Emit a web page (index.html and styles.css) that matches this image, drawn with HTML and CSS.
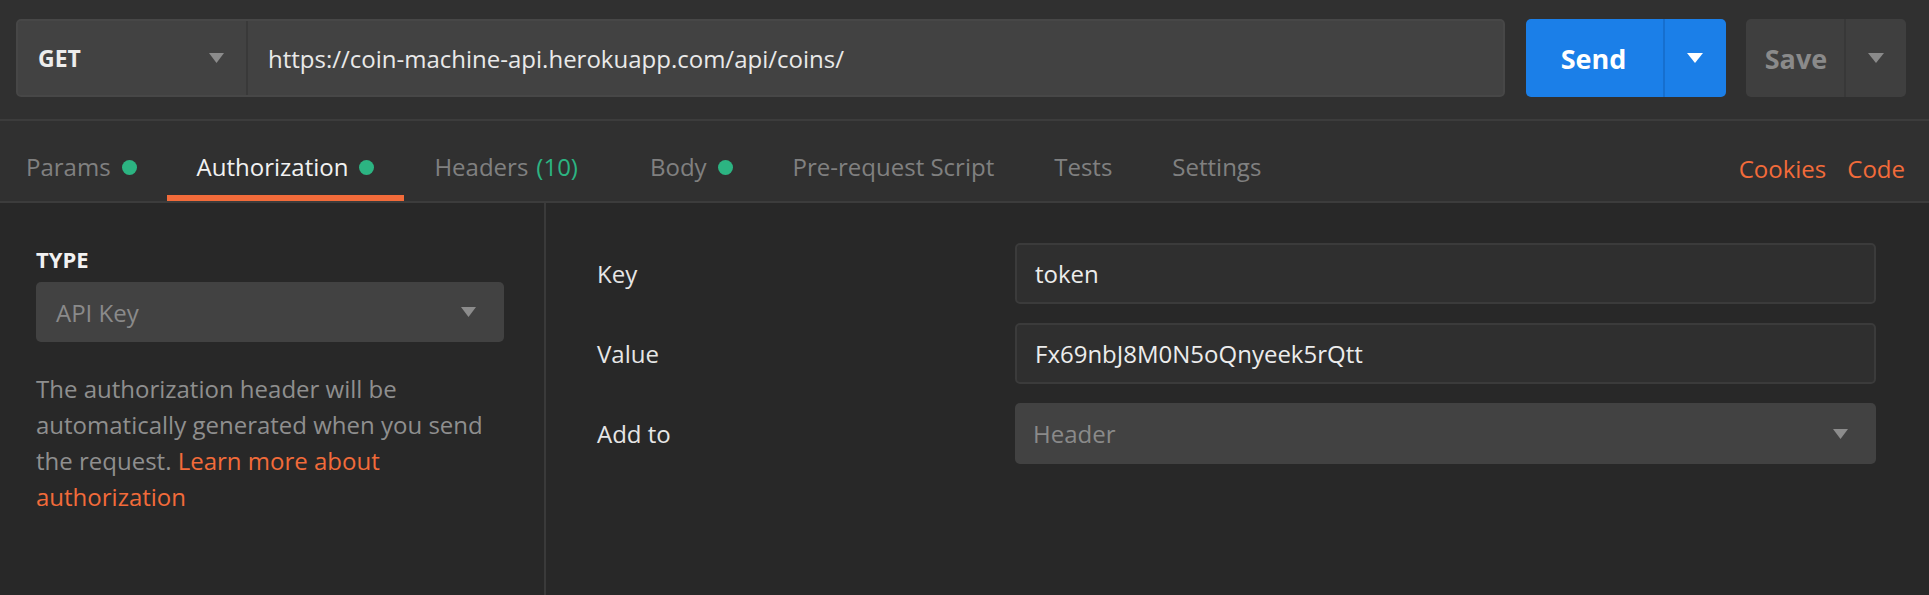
FILE: index.html
```html
<!DOCTYPE html>
<html lang="en">
<head>
<meta charset="utf-8">
<title>Request – Authorization</title>
<link rel="stylesheet" href="styles.css">
</head>
<body>
<div class="app">
  <header class="request-bar">
    <div class="url-group">
      <div class="method">
        <span class="method-name">GET</span>
        <svg class="caret caret-grey" width="15" height="10" viewBox="0 0 15 10"><path d="M0 0H15L7.5 10Z"/></svg>
      </div>
      <div class="url">https://coin-machine-api.herokuapp.com/api/coins/</div>
    </div>
    <div class="split-btn send">
      <span class="split-main">Send</span>
      <span class="split-arrow"><svg class="caret" width="16" height="10" viewBox="0 0 16 10"><path d="M0 0H16L8 10Z"/></svg></span>
    </div>
    <div class="split-btn save">
      <span class="split-main">Save</span>
      <span class="split-arrow"><svg class="caret" width="16" height="10" viewBox="0 0 16 10"><path d="M0 0H16L8 10Z"/></svg></span>
    </div>
  </header>

  <nav class="tab-bar">
    <div class="tabs">
      <div class="tab">Params<span class="dot"></span></div>
      <div class="tab active">Authorization<span class="dot"></span></div>
      <div class="tab">Headers <span class="count">(10)</span></div>
      <div class="tab">Body<span class="dot"></span></div>
      <div class="tab">Pre-request Script</div>
      <div class="tab">Tests</div>
      <div class="tab">Settings</div>
    </div>
    <div class="tab-links">
      <a class="link">Cookies</a>
      <a class="link">Code</a>
    </div>
  </nav>

  <main class="auth">
    <section class="auth-type">
      <div class="type-label">TYPE</div>
      <div class="select type-select">
        <span>API Key</span>
        <svg class="caret caret-grey" width="15" height="10" viewBox="0 0 15 10"><path d="M0 0H15L7.5 10Z"/></svg>
      </div>
      <p class="type-help">The authorization header will be automatically generated when you send the request. <a class="link">Learn more about authorization</a></p>
    </section>
    <section class="auth-fields">
      <label class="field-label">Key</label>
      <div class="input">token</div>
      <label class="field-label">Value</label>
      <div class="input">Fx69nbJ8M0N5oQnyeek5rQtt</div>
      <label class="field-label">Add to</label>
      <div class="select add-select">
        <span>Header</span>
        <svg class="caret caret-grey" width="15" height="10" viewBox="0 0 15 10"><path d="M0 0H15L7.5 10Z"/></svg>
      </div>
    </section>
  </main>
</div>
</body>
</html>
```

FILE: styles.css
```css
* { box-sizing: border-box; }

html, body {
  margin: 0;
  padding: 0;
  height: 100%;
}

body {
  background: #282828;
  font-family: "Open Sans", "Noto Sans", "Liberation Sans", sans-serif;
  font-size: 24px;
  color: #e6e6e6;
}

.app {
  display: flex;
  flex-direction: column;
  height: 100%;
}

/* ---------- request bar ---------- */
.request-bar {
  display: flex;
  align-items: stretch;
  gap: 20px;
  height: 121px;
  padding: 19px 23px 22px 16px;
  background: #303030;
  border-bottom: 2px solid #3c3c3c;
}

.url-group {
  flex: 1;
  display: flex;
  background: #424242;
  border: 2px solid #474747;
  border-radius: 5px;
  margin-right: 1px;
}

.method {
  width: 230px;
  display: flex;
  align-items: center;
  justify-content: space-between;
  padding: 0 22px 0 20px;
  border-right: 2px solid #393939;
}

.method-name {
  font-weight: 700;
  font-size: 23px;
  color: #ededed;
}

.url {
  flex: 1;
  display: flex;
  align-items: center;
  padding-left: 20px;
  color: #e9e9e9;
  font-size: 24px;
}

.caret { display: block; fill: #ffffff; }
.caret-grey { fill: #8c8c8c; }

.split-btn {
  display: flex;
  border-radius: 5px;
  overflow: hidden;
  font-weight: 700;
  font-size: 27px;
}

.split-main {
  display: flex;
  align-items: center;
  justify-content: center;
}

.split-arrow {
  width: 60px;
  display: flex;
  align-items: center;
  justify-content: center;
}

.send { width: 200px; background: #1b7fe8; color: #ffffff; }
.send .split-main { width: 139px; border-right: 2px solid #166fcf; padding-right: 2px; }

.save { width: 160px; background: #3f3f3f; color: #8a8a8a; }
.save .split-main { width: 100px; border-right: 2px solid #383838; padding-left: 2px; }
.save .caret { fill: #8a8a8a; }

/* ---------- tabs ---------- */
.tab-bar {
  display: flex;
  justify-content: space-between;
  height: 82px;
  background: #303030;
  border-bottom: 2px solid #3c3c3c;
}

.tabs {
  display: flex;
  margin-left: -4px;
}

.tab {
  display: flex;
  align-items: flex-start;
  height: 80px;
  padding: 29px 30px 0;
  line-height: 33px;
  color: #808080;
  white-space: nowrap;
}

.tab.active {
  color: #f2f2f2;
  border-bottom: 6px solid #f26b3a;
}

.dot {
  width: 15px;
  height: 15px;
  border-radius: 50%;
  background: #2cb482;
  margin: 10px 0 0 11px;
}

.count {
  color: #2cb482;
  margin-left: 8px;
  margin-right: 12px;
}

.tab-links {
  display: flex;
  gap: 21px;
  padding: 31px 24px 0 0;
  line-height: 33px;
}

.link {
  color: #f26b3a;
  text-decoration: none;
}

/* ---------- auth body ---------- */
.auth {
  flex: 1;
  display: flex;
}

.auth-type {
  width: 546px;
  padding: 41px 40px 0 36px;
  border-right: 2px solid #3a3a3a;
}

.type-label {
  font-size: 22px;
  font-weight: 700;
  line-height: 30px;
  color: #f2f2f2;
  margin-bottom: 8px;
}

.select {
  display: flex;
  align-items: center;
  justify-content: space-between;
  height: 60px;
  background: #424242;
  border-radius: 5px;
  color: #8a8a8a;
  line-height: 33px;
}

.type-select { padding: 0 28px 0 20px; }

.type-help {
  margin: 29px 0 0;
  line-height: 36px;
  color: #8f8f8f;
}

.auth-fields {
  flex: 1;
  display: grid;
  grid-template-columns: 418px 1fr;
  grid-auto-rows: 61px;
  row-gap: 19px;
  align-content: start;
  padding: 40px 53px 0 51px;
}

.field-label {
  display: flex;
  align-items: center;
  color: #e6e6e6;
}

.input {
  display: flex;
  align-items: center;
  padding: 0 18px;
  background: #2f2f2f;
  border: 2px solid #3b3b3b;
  border-radius: 5px;
  color: #ececec;
}

.add-select {
  height: 61px;
  padding: 0 28px 0 18px;
}
```
